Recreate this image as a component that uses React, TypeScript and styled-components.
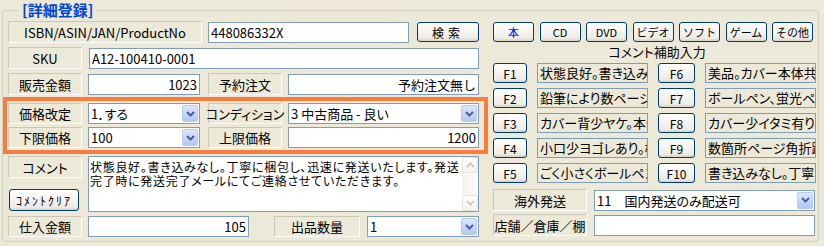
import { Fragment } from "react";
import styled, { createGlobalStyle } from "styled-components";

const GlobalStyle = createGlobalStyle`
  html, body {
    margin: 0;
    padding: 0;
    background: #ece9d8;
  }
  body {
    font-family: "Noto Sans CJK JP", "Noto Sans", sans-serif;
    font-size: 13px;
    color: #000;
    font-feature-settings: "palt";
  }
`;

// 枠 (グループボックス)

const Frame = styled.fieldset`
  box-sizing: border-box;
  width: 817px;
  height: 242px;
  margin: 0 0 0 2px;
  padding: 1px 0 0 0;
  border: 1px solid #d0d0bf;
  border-radius: 4px;
`;

const Legend = styled.legend`
  margin-left: 16px;
  padding: 0 3px;
  font-size: 15px;
  font-weight: bold;
  line-height: 20px;
  color: #0046d5;
`;

const Body = styled.div`
  display: flex;
  gap: 5px;
`;

const LeftCol = styled.div`
  box-sizing: border-box;
  width: 485px;
  padding-left: 5px;
  display: flex;
  flex-direction: column;
`;

const RightCol = styled.div`
  width: 323px;
  display: flex;
  flex-direction: column;
`;

const Row = styled.div<{ $h?: number; $mt?: number }>`
  display: flex;
  align-items: center;
  height: ${(p) => p.$h ?? 22}px;
  margin-top: ${(p) => p.$mt ?? 0}px;
`;

const Highlight = styled.div`
  box-sizing: border-box;
  width: 485px;
  margin: 2px 0 0 -5px;
  padding: 2px 0 2px 1px;
  border: 4px solid #fa7b3c;
  display: flex;
  flex-direction: column;
  gap: 3px;
`;

const Label = styled.div<{ $w: number; $ml?: number; $h?: number }>`
  box-sizing: border-box;
  flex: none;
  width: ${(p) => p.$w}px;
  height: ${(p) => (p.$h ? `${p.$h}px` : "100%")};
  margin-left: ${(p) => p.$ml ?? 0}px;
  display: flex;
  align-items: center;
  justify-content: center;
  border: 1px solid;
  border-color: #cbc7b7 #ffffff #ffffff #cbc7b7;
  font-size: 13px;
  white-space: nowrap;
`;

const TextBox = styled.input<{ $w: number; $ml?: number; $right?: boolean }>`
  box-sizing: border-box;
  flex: none;
  width: ${(p) => p.$w}px;
  height: 21px;
  margin: 0 0 0 ${(p) => p.$ml ?? 0}px;
  padding: 0 2px;
  border: 1px solid #7f9db9;
  background: #ffffff;
  font-family: inherit;
  font-size: 13px;
  color: #000;
  text-align: ${(p) => (p.$right ? "right" : "left")};
  outline: none;
`;

const Combo = styled.div<{ $w: number; $ml?: number }>`
  box-sizing: border-box;
  flex: none;
  width: ${(p) => p.$w}px;
  height: 21px;
  margin-left: ${(p) => p.$ml ?? 0}px;
  border: 1px solid #7f9db9;
  background: #fff;
  display: flex;
`;

const ComboText = styled.span`
  flex: 1;
  padding-left: 2px;
  display: flex;
  align-items: center;
  white-space: nowrap;
  overflow: hidden;
`;

const DropBtn = styled.span`
  box-sizing: border-box;
  width: 16px;
  margin: 1px;
  border: 1px solid #b8cbf5;
  border-radius: 2px;
  background: linear-gradient(180deg, #dde7fe 0%, #c6d6fb 50%, #b3c7f5 100%);
  display: flex;
  align-items: center;
  justify-content: center;
`;

const XpButton = styled.button<{
  $w: number;
  $h?: number;
  $ml?: number;
  $mt?: number;
  $blue?: boolean;
  $fs?: number;
  $ls?: number;
}>`
  box-sizing: border-box;
  flex: none;
  width: ${(p) => p.$w}px;
  height: ${(p) => p.$h ?? 20}px;
  margin: ${(p) => p.$mt ?? 0}px 0 0 ${(p) => p.$ml ?? 0}px;
  padding: 0;
  border: 1px solid #003c74;
  border-radius: 3px;
  background: linear-gradient(180deg, #ffffff 0%, #f6f5f1 40%, #ecebe5 85%, #d6d0c5 100%);
  font-family: inherit;
  font-size: ${(p) => p.$fs ?? 11}px;
  letter-spacing: ${(p) => p.$ls ?? 0}px;
  color: ${(p) => (p.$blue ? "#0000ff" : "#000")};
  white-space: nowrap;
`;

const LabelStack = styled.div`
  width: 74px;
  height: 100%;
  display: flex;
  flex-direction: column;
`;

const MemoBox = styled.div`
  box-sizing: border-box;
  width: 391px;
  height: 56px;
  margin-left: 6px;
  border: 1px solid #7f9db9;
  background: #fff;
  display: flex;
`;

const MemoText = styled.div`
  flex: 1;
  padding: 3px 1px;
  font-size: 12px;
  line-height: 14px;
  letter-spacing: 0.7px;
  white-space: pre-line;
`;

const ScrollBar = styled.div`
  width: 16px;
  background: linear-gradient(90deg, #f3f1ec 0%, #fdfdfb 100%);
  display: flex;
  flex-direction: column;
  justify-content: space-between;
`;

const ScrollBtn = styled.span`
  box-sizing: border-box;
  height: 16px;
  border: 1px solid #e8e6df;
  border-radius: 2px;
  background: linear-gradient(180deg, #ffffff 0%, #f4f3ee 100%);
  display: flex;
  align-items: center;
  justify-content: center;
`;

const CategoryRow = styled.div`
  width: 320px;
  height: 20px;
  margin-top: 1px;
  display: flex;
  justify-content: space-between;
`;

const Caption = styled.div`
  height: 19px;
  padding-left: 5px;
  line-height: 19px;
  text-align: center;
  font-size: 13px;
`;

const FGrid = styled.div`
  margin-top: 2px;
  display: grid;
  grid-template-columns: 34px 111px 37px 111px;
  grid-auto-rows: 20px;
  column-gap: 10px;
  row-gap: 5px;
`;

const Phrase = styled.div`
  box-sizing: border-box;
  min-width: 0;
  border: 1px solid #7f9db9;
  background: #ece9d8;
  padding: 0 2px;
  font-size: 13px;
  line-height: 18px;
  white-space: nowrap;
  overflow: hidden;
`;

const Chevron = ({ up, color }: { up?: boolean; color: string }) => (
  <svg width="9" height="6" viewBox="0 0 9 6">
    <polyline
      points={up ? "1,5 4.5,1.5 8,5" : "1,1 4.5,4.5 8,1"}
      fill="none"
      stroke={color}
      strokeWidth="2"
    />
  </svg>
);

const Select = ({ w, ml, value }: { w: number; ml?: number; value: string }) => (
  <Combo $w={w} $ml={ml}>
    <ComboText>{value}</ComboText>
    <DropBtn>
      <Chevron color="#4d6185" />
    </DropBtn>
  </Combo>
);

const categories = ["本", "CD", "DVD", "ビデオ", "ソフト", "ゲーム", "その他"];

const phrases: [string, string, string, string][] = [
  ["F1", "状態良好。書き込みなし。", "F6", "美品。カバー本体共に良好。"],
  ["F2", "鉛筆により数ページに書き込みあり。", "F7", "ボールペン、蛍光ペンでの書き込みあり。"],
  ["F3", "カバー背少ヤケ。本体良好。", "F8", "カバー少イタミ有り。本体良好。"],
  ["F4", "小口少ヨゴレあり。概ね良好。", "F9", "数箇所ページ角折跡あり。"],
  ["F5", "ごく小さくボールペンで書き込みあり。", "F10", "書き込みなし。丁寧に梱包します。"],
];

const App = () => {
  return (
    <>
      <GlobalStyle />
      <Frame>
        <Legend>[詳細登録]</Legend>
        <Body>
          <LeftCol>
            <Row>
              <Label $w={194}>ISBN/ASIN/JAN/ProductNo</Label>
              <TextBox $w={201} $ml={6} readOnly value="448086332X" />
              <XpButton $w={62} $ml={8} $fs={12} $ls={4}>検索</XpButton>
            </Row>
            <Row $mt={4}>
              <Label $w={74}>SKU</Label>
              <TextBox $w={390} $ml={7} readOnly value="A12-100410-0001" />
            </Row>
            <Row $mt={4}>
              <Label $w={74}>販売金額</Label>
              <TextBox $w={112} $ml={6} $right readOnly value="1023" />
              <Label $w={74} $ml={8}>予約注文</Label>
              <TextBox $w={191} $ml={6} $right readOnly value="予約注文無し" />
            </Row>
            <Highlight>
              <Row $h={21}>
                <Label $w={74}>価格改定</Label>
                <Select w={112} ml={6} value="1．する" />
                <Label $w={74} $ml={8}>コンディション</Label>
                <Select w={191} ml={6} value="3 中古商品 - 良い" />
              </Row>
              <Row $h={21}>
                <Label $w={74}>下限価格</Label>
                <Select w={112} ml={6} value="100" />
                <Label $w={74} $ml={8}>上限価格</Label>
                <TextBox $w={191} $ml={6} $right readOnly value="1200" />
              </Row>
            </Highlight>
            <Row $h={56} $mt={2}>
              <LabelStack>
                <Label $w={74} $h={22}>コメント</Label>
                <XpButton $w={70} $h={22} $ml={1} $mt={11} $fs={12} $ls={2}>
                  ｺﾒﾝﾄｸﾘｱ
                </XpButton>
              </LabelStack>
              <MemoBox>
                <MemoText>
                  {"状態良好。書き込みなし。丁寧に梱包し、迅速に発送いたします。発送\n完了時に発送完了メールにてご連絡させていただきます。"}
                </MemoText>
                <ScrollBar>
                  <ScrollBtn>
                    <Chevron up color="#cfcdc2" />
                  </ScrollBtn>
                  <ScrollBtn>
                    <Chevron color="#cfcdc2" />
                  </ScrollBtn>
                </ScrollBar>
              </MemoBox>
            </Row>
            <Row $h={21} $mt={4}>
              <Label $w={74}>仕入金額</Label>
              <TextBox $w={161} $ml={6} $right readOnly value="105" />
              <Label $w={86} $ml={25}>出品数量</Label>
              <Select w={112} ml={7} value="1" />
            </Row>
          </LeftCol>

          <RightCol>
            <CategoryRow>
              {categories.map((c, i) => (
                <XpButton key={c} $w={41} $blue={i === 0}>
                  {c}
                </XpButton>
              ))}
            </CategoryRow>
            <Caption>コメント補助入力</Caption>
            <FGrid>
              {phrases.map(([k1, t1, k2, t2]) => (
                <Fragment key={k1}>
                  <XpButton $w={34} $fs={12}>{k1}</XpButton>
                  <Phrase>{t1}</Phrase>
                  <XpButton $w={37} $fs={12}>{k2}</XpButton>
                  <Phrase>{t2}</Phrase>
                </Fragment>
              ))}
            </FGrid>
            <Row $mt={6}>
              <Label $w={94}>海外発送</Label>
              <Select w={221} ml={7} value="11　国内発送のみ配送可" />
            </Row>
            <Row $mt={3}>
              <Label $w={94}>店舗／倉庫／棚</Label>
              <TextBox $w={221} $ml={7} readOnly value="" />
            </Row>
          </RightCol>
        </Body>
      </Frame>
    </>
  );
};

export default App;
